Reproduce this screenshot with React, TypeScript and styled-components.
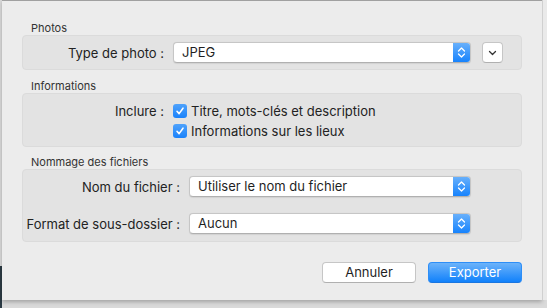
import React from 'react';
import styled, { createGlobalStyle } from 'styled-components';

const GlobalStyle = createGlobalStyle`
    html, body {
        margin: 0;
        padding: 0;
    }
    body {
        width: 547px;
        height: 308px;
        overflow: hidden;
        background: #dcdcdc;
        font-family: Inter, "Liberation Sans", Arial, sans-serif;
        color: #222;
    }
`

const Desktop = styled.div`
    display: flex;
    width: 547px;
    height: 308px;
    background:
        linear-gradient(to bottom, transparent 0px, transparent 266px, #2c3b45 266px) 0 0 / 2px 100% no-repeat,
        #dadada;
`

const Sheet = styled.div`
    box-sizing: border-box;
    margin-left: 2px;
    width: 540px;
    height: 300px;
    background: #ececec;
    border-top: 1px solid #a0a0a0;
    box-shadow: 0 2px 4px rgba(0, 0, 0, 0.25);
    padding: 0 20px;
    display: flex;
    flex-direction: column;
`

const RightEdge = styled.div`
    flex: 1;
    height: 300px;
    border-left: 1px solid #d0d0d0;
    background: #eaeaea;
`

const SectionTitle = styled.div<{ top: number }>`
    margin-top: ${p => p.top}px;
    padding-left: 9px;
    height: 14px;
    font-size: 11px;
    line-height: 14px;
    color: #333;
`

const Box = styled.div<{ pad: string }>`
    box-sizing: border-box;
    width: 500px;
    background: #e3e3e3;
    border: 1px solid #dbdbdb;
    border-radius: 4px;
    padding: ${p => p.pad};
    display: flex;
    flex-direction: column;
`

const Row = styled.div<{ gap?: number }>`
    display: flex;
    align-items: center;
    margin-top: ${p => p.gap || 0}px;
`

const Label = styled.div<{ width: number }>`
    width: ${p => p.width}px;
    flex-shrink: 0;
    text-align: right;
    font-size: 13px;
    line-height: 14px;
    white-space: nowrap;
    padding-right: 9px;
    box-sizing: border-box;
`

const SelectBox = styled.div<{ width: number }>`
    box-sizing: border-box;
    width: ${p => p.width}px;
    height: 21px;
    display: flex;
    align-items: stretch;
    background: #fff;
    border: 1px solid #c6c6c6;
    border-bottom-color: #b0b0b0;
    border-radius: 4px;
    overflow: hidden;
    box-shadow: 0 0.5px 1px rgba(0, 0, 0, 0.08);
`

const SelectValue = styled.div`
    flex: 1;
    padding-left: 8px;
    font-size: 13px;
    line-height: 19px;
    color: #1f1f1f;
`

const Stepper = styled.div`
    width: 17px;
    display: flex;
    align-items: center;
    justify-content: center;
    background: linear-gradient(to bottom, #68b0fb, #1783fd);
`

const MiniButton = styled.div`
    box-sizing: border-box;
    width: 21px;
    height: 21px;
    margin-left: 11px;
    display: flex;
    align-items: center;
    justify-content: center;
    background: #fff;
    border: 1px solid #c6c6c6;
    border-bottom-color: #b0b0b0;
    border-radius: 4px;
`

const Check = styled.div`
    width: 14px;
    height: 14px;
    border-radius: 3px;
    background: linear-gradient(to bottom, #4fa2fb, #1a82fb);
    display: flex;
    align-items: center;
    justify-content: center;
    margin-right: 4px;
`

const CheckText = styled.div`
    font-size: 13px;
    line-height: 14px;
    white-space: nowrap;
`

const Spacer = styled.div<{ width: number }>`
    width: ${p => p.width}px;
    flex-shrink: 0;
`

const Footer = styled.div`
    display: flex;
    justify-content: flex-end;
    gap: 12px;
    width: 500px;
    margin-top: 20px;
`

const Button = styled.div<{ primary?: boolean }>`
    box-sizing: border-box;
    width: 94px;
    height: 21px;
    border-radius: 4px;
    font-size: 13px;
    line-height: 19px;
    text-align: center;
    color: ${p => (p.primary ? '#fff' : '#1f1f1f')};
    background: ${p => (p.primary ? 'linear-gradient(to bottom, #6cb3fa, #1181fb)' : '#fff')};
    border: 1px solid ${p => (p.primary ? '#2d8ef7' : '#c6c6c6')};
    border-bottom-color: ${p => (p.primary ? '#1a76e0' : '#b0b0b0')};
`

const StepperIcon = () => (
    <svg width="9" height="13" viewBox="0 0 9 13">
        <path d="M1.5 5 L4.5 2 L7.5 5 M1.5 8 L4.5 11 L7.5 8" fill="none" stroke="#fff" strokeWidth="1.3" strokeLinecap="round" strokeLinejoin="round" />
    </svg>
)

const ChevronDown = () => (
    <svg width="9" height="6" viewBox="0 0 9 6">
        <path d="M1.5 1.5 L4.5 4.5 L7.5 1.5" fill="none" stroke="#333" strokeWidth="1.3" strokeLinecap="round" strokeLinejoin="round" />
    </svg>
)

const CheckMark = () => (
    <svg width="10" height="10" viewBox="0 0 10 10">
        <path d="M2 5.3 L4.1 7.6 L8 2.2" fill="none" stroke="#fff" strokeWidth="1.6" strokeLinecap="round" strokeLinejoin="round" />
    </svg>
)

const Select = ({ width, value }: { width: number; value: string }) => (
    <SelectBox width={width}>
        <SelectValue>{value}</SelectValue>
        <Stepper><StepperIcon /></Stepper>
    </SelectBox>
)

const CheckRow = ({ label, text, gap }: { label?: string; text: string; gap?: number }) => (
    <Row gap={gap}>
        {label ? <Label width={150}>{label}</Label> : <Spacer width={150} />}
        <Check><CheckMark /></Check>
        <CheckText>{text}</CheckText>
    </Row>
)

export default function App() {
    return (
        <Desktop>
            <GlobalStyle />
            <Sheet>
                <SectionTitle top={20}>Photos</SectionTitle>
                <Box pad="6px 0 6px 0">
                    <Row>
                        <Label width={150}>Type de photo :</Label>
                        <Select width={298} value="JPEG" />
                        <MiniButton><ChevronDown /></MiniButton>
                    </Row>
                </Box>

                <SectionTitle top={9}>Informations</SectionTitle>
                <Box pad="10px 0 8px 0">
                    <CheckRow label="Inclure :" text="Titre, mots-clés et description" />
                    <CheckRow text="Informations sur les lieux" gap={6} />
                </Box>

                <SectionTitle top={8}>Nommage des fichiers</SectionTitle>
                <Box pad="6px 0 7px 0">
                    <Row>
                        <Label width={166}>Nom du fichier :</Label>
                        <Select width={282} value="Utiliser le nom du fichier" />
                    </Row>
                    <Row gap={16}>
                        <Label width={166}>Format de sous-dossier :</Label>
                        <Select width={282} value="Aucun" />
                    </Row>
                </Box>

                <Footer>
                    <Button>Annuler</Button>
                    <Button primary>Exporter</Button>
                </Footer>
            </Sheet>
            <RightEdge />
        </Desktop>
    )
}
